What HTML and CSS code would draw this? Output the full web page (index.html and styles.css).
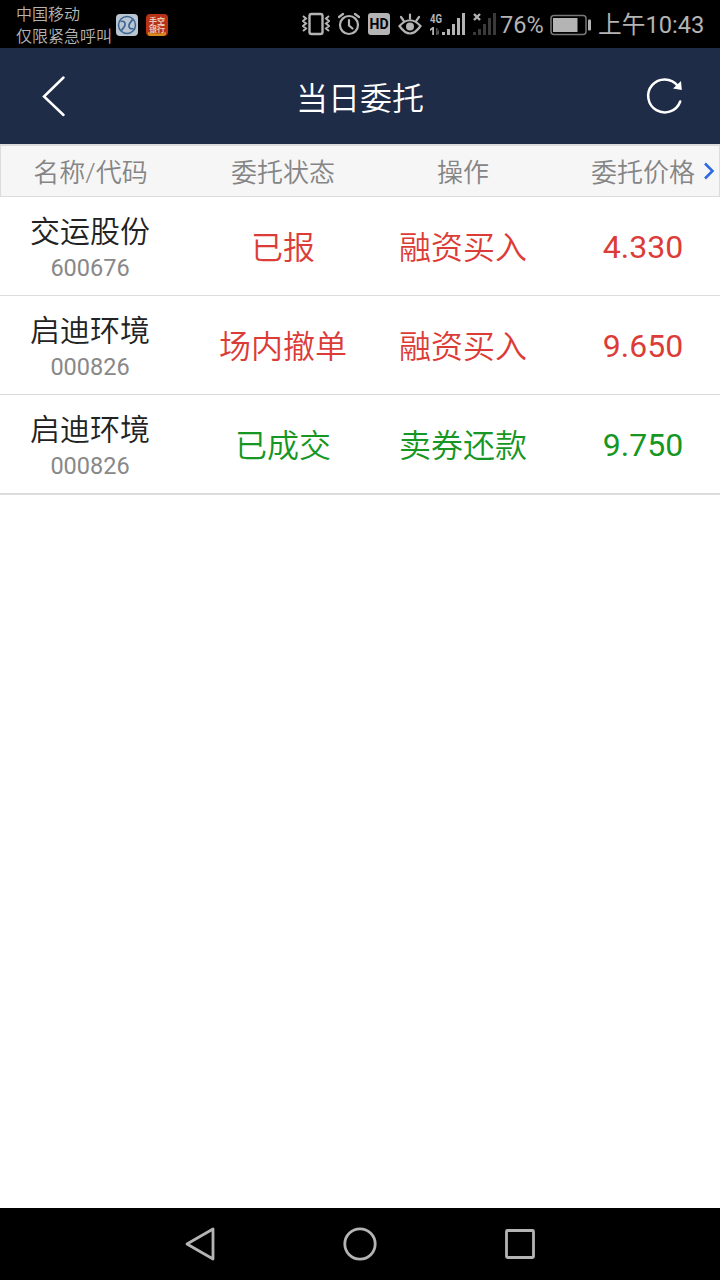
FILE: index.html
```html
<!DOCTYPE html>
<html lang="zh-CN">
<head>
    <meta charset="UTF-8">
    <meta name="viewport" content="width=device-width, initial-scale=1.0">
    <title>当日委托</title>
    <link rel="stylesheet" href="styles.css">
</head>
<body>
    <div class="screen">
        <div class="status-bar">
            <div class="carrier">
                <span>中国移动</span>
                <span>仅限紧急呼叫</span>
            </div>
            <svg class="app-icon" width="22" height="22" viewBox="0 0 22 22">
                <rect width="22" height="22" rx="4" fill="#b9c6d2"/>
                <circle cx="11" cy="11" r="8.5" fill="none" stroke="#3d6594" stroke-width="1.5"/>
                <path d="M4.500 7.500C8 6.500 9.500 8.500 9 11S6.500 14.500 5.500 16.500M17.500 14.500C14 15.500 12.500 13.500 13 11S15.500 7.500 16.500 5.500" fill="none" stroke="#3d6594" stroke-width="1.700"/>
            </svg>
            <svg class="app-icon app-bank" width="22" height="22" viewBox="0 0 22 22">
                <rect width="22" height="22" rx="4" fill="#b83218"/>
                <path d="M2 18q9 3 18 0v2q-1 2-3 2H5q-3 0-3-2z" fill="#d78a1d"/>
                <text x="11" y="10" text-anchor="middle" class="bank-text">手空</text>
                <text x="11" y="18" text-anchor="middle" class="bank-text">银行</text>
            </svg>

            <div class="status-icons">
                <!-- vibrate -->
                <svg width="28" height="48" viewBox="0 0 28 48" fill="none" stroke="#b4b4b4">
                    <rect x="7.500" y="14" width="13" height="20" rx="2" stroke-width="2.400"/>
                    <path d="M1 16l3 2.500-3 2.500 3 2.500-3 2.500 3 2.500-3 2.500M27 16l-3 2.500 3 2.500-3 2.500 3 2.500-3 2.500 3 2.500" stroke-width="2"/>
                </svg>
                <!-- alarm -->
                <svg class="alarm" width="22" height="48" viewBox="0 0 22 48" fill="none" stroke="#b4b4b4" stroke-width="2.200" stroke-linecap="round">
                    <circle cx="11" cy="25" r="9"/>
                    <path d="M11 20v5.500l3.500 3M1 17L5 14M21 17L17 14"/>
                </svg>
                <!-- hd -->
                <svg class="hd" width="22" height="48" viewBox="0 0 22 48">
                    <rect y="13" width="22" height="22" rx="3" fill="#b4b4b4"/>
                    <text x="11" y="28.800" text-anchor="middle" class="hd-text">HD</text>
                </svg>
                <!-- eye comfort -->
                <svg class="eye" width="24" height="48" viewBox="0 0 24 48" fill="none" stroke="#b4b4b4" stroke-width="2.200" stroke-linecap="round">
                    <path d="M1.500 26Q12 14.500 22.500 26Q12 41 1.500 26zM12 14.500v4M3 17l2.500 3.500M21 17l-2.500 3.500"/>
                    <circle cx="12" cy="26.500" r="4" fill="#b4b4b4" stroke="none"/>
                </svg>
                <!-- sim 1 -->
                <svg class="signal" width="36" height="48" viewBox="0 0 36 48" fill="#b4b4b4">
                    <text x="0" y="22.500" textLength="12" lengthAdjust="spacingAndGlyphs" class="net-text">4G</text>
                    <path d="M0 29l2.500-2H4v8H2.200v-5.500L0 31z"/>
                    <path d="M6 28h1.500v7H6zM9 29v6l-2-2z" fill="#555"/>
                    <path d="M12 32h3v3h-3zM17 29h3v6h-3zM22 24h3v11h-3zM27 18h3v17h-3zM32 13h3v22h-3z"/>
                </svg>
                <!-- sim 2 -->
                <svg class="signal-off" width="23" height="48" viewBox="0 0 23 48" fill="#3a3a3a">
                    <path d="M1 14l6 6M7 14l-6 6" stroke="#b4b4b4" stroke-width="2.400"/>
                    <path d="M0 32h3v3H0zM5 29h3v6H5zM10 24h3v11h-3zM15 18h3v17h-3zM20 13h3v22h-3z"/>
                </svg>
                <span class="percent">76%</span>
                <svg class="battery" width="41" height="48" viewBox="0 0 41 48">
                    <rect x="1" y="15.500" width="35" height="19" rx="3" fill="none" stroke="#777" stroke-width="1.500"/>
                    <rect x="3" y="18" width="24.500" height="14" fill="#b4b4b4"/>
                    <rect x="38" y="19.500" width="3" height="11" rx="1" fill="#b4b4b4"/>
                </svg>
                <span class="clock">上午10:43</span>
            </div>
        </div>

        <div class="header">
            <svg class="back" width="26" height="44" viewBox="0 0 26 44">
                <path d="M21.500 3.500L2 22.500l19.500 18.500" fill="none" stroke="#fff" stroke-width="2.500" stroke-linecap="round"/>
            </svg>
            <h1>当日委托</h1>
            <svg class="refresh" width="40" height="40" viewBox="0 0 40 40">
                <path d="M32.500 9.500A16.500 16.500 0 1 0 35.200 25.500" fill="none" stroke="#fff" stroke-width="2.500" stroke-linecap="round"/>
                <path d="M36 5L36.800 14L28 12.500z" fill="#fff"/>
            </svg>
        </div>

        <div class="row table-head">
            <div class="col">名称/代码</div>
            <div class="col">委托状态</div>
            <div class="col">操作</div>
            <div class="col">委托价格</div>
            <svg class="more" width="12" height="18" viewBox="0 0 12 18">
                <path d="M2 1.500L9.500 9 2 16.500" fill="none" stroke="#2f6be0" stroke-width="2.600"/>
            </svg>
        </div>

        <div class="list">
            <div class="row order red">
                <div class="col stock">
                    <span class="name">交运股份</span>
                    <span class="code">600676</span>
                </div>
                <div class="col">已报</div>
                <div class="col">融资买入</div>
                <div class="col price">4.330</div>
            </div>
            <div class="row order red">
                <div class="col stock">
                    <span class="name">启迪环境</span>
                    <span class="code">000826</span>
                </div>
                <div class="col">场内撤单</div>
                <div class="col">融资买入</div>
                <div class="col price">9.650</div>
            </div>
            <div class="row order green">
                <div class="col stock">
                    <span class="name">启迪环境</span>
                    <span class="code">000826</span>
                </div>
                <div class="col">已成交</div>
                <div class="col">卖券还款</div>
                <div class="col price">9.750</div>
            </div>
        </div>

        <div class="nav-bar">
            <svg width="34" height="36" viewBox="0 0 34 36"><path d="M4 18L30 3v30z"/></svg>
            <svg width="34" height="36" viewBox="0 0 34 36"><circle cx="17" cy="18" r="15.200"/></svg>
            <svg width="34" height="36" viewBox="0 0 34 36"><rect x="3.500" y="4.500" width="27" height="27" rx="1"/></svg>
        </div>
    </div>
</body>
</html>
```
FILE: styles.css
```css
* {
    margin: 0;
    padding: 0;
    box-sizing: border-box;
}

body {
    background: #fff;
    font-family: Roboto, "Noto Sans CJK SC", sans-serif;
    font-weight: 350;
}

svg {
    display: block;
    flex-shrink: 0;
}

.screen {
    width: 720px;
    height: 1280px;
    display: flex;
    flex-direction: column;
    overflow: hidden;
}

/* status bar */
.status-bar {
    height: 48px;
    background: #000;
    color: #b4b4b4;
    display: flex;
    align-items: center;
    padding: 0 16px;
    white-space: nowrap;
}

.carrier {
    display: flex;
    flex-direction: column;
    width: 100px;
    padding-top: 3px;
    font-size: 16px;
    line-height: 22px;
}

.app-icon {
    margin-top: 2px;
}

.app-bank {
    margin-left: 8px;
}

.bank-text {
    font-size: 8px;
    font-weight: 700;
    fill: #e8c9b8;
}

.status-icons {
    margin-left: auto;
    display: flex;
    align-items: center;
}

.alarm,
.hd,
.eye,
.signal {
    margin-left: 8px;
}

.signal-off {
    margin-left: 7px;
}

.hd-text {
    font-size: 14px;
    font-weight: 700;
    fill: #000;
}

.net-text {
    font-size: 13px;
    font-weight: 700;
}

.percent {
    width: 48px;
    padding: 2px 0 0 4px;
    font-size: 23.5px;
    font-weight: 400;
}

.battery {
    margin-left: 6px;
}

.clock {
    width: 106px;
    margin-left: 7px;
    padding-top: 2px;
    font-size: 23.7px;
    font-weight: 400;
    line-height: 32px;
}

/* title bar */
.header {
    height: 96px;
    background: #1e2c48;
    color: #fff;
    display: grid;
    grid-template-columns: 40px 1fr 40px;
    align-items: center;
    padding: 0 35px 0 42px;
    text-align: center;
}

.header h1 {
    padding-right: 7px;
    font-size: 32px;
    font-weight: 350;
}

/* table */
.row {
    display: grid;
    grid-template-columns: 193px 180px 180px 1fr;
    align-items: center;
    text-align: center;
}

.col:first-child {
    padding-right: 13px;
}

.col:nth-child(4) {
    padding-left: 13px;
}

.table-head {
    position: relative;
    grid-template-columns: 192px 180px 180px 1fr;
    height: 53px;
    background: #f6f6f7;
    border: 1px solid #dcdcdc;
    border-top-width: 2px;
    color: #858585;
    font-size: 26px;
    line-height: 48px;
    padding-top: 3px;
}

.table-head .col:nth-child(4) {
    padding-left: 14px;
}

.more {
    position: absolute;
    top: 16px;
    right: 4px;
}

.list {
    flex: 1;
}

.order {
    height: 99px;
    border-bottom: 1px solid #dcdcdc;
    font-size: 32px;
    line-height: 48px;
}

.order:last-child {
    height: 100px;
    border-bottom-width: 2px;
}

.order .col {
    padding-top: 4px;
}

.order .price {
    padding-top: 1px;
}

.stock {
    display: flex;
    flex-direction: column;
    align-items: center;
}

.name {
    color: #222;
    font-size: 30px;
    line-height: 40px;
}

.code {
    color: #888;
    font-size: 23.5px;
    font-weight: 400;
    line-height: 32px;
}

.price {
    font-weight: 400;
}

.red {
    color: #dc3c37;
}

.green {
    color: #169622;
}

/* android buttons */
.nav-bar {
    height: 72px;
    background: #000;
    display: flex;
    align-items: center;
    justify-content: center;
    gap: 126px;
}

.nav-bar svg {
    fill: none;
    stroke: #b4b4b4;
    stroke-width: 2.8;
    stroke-linejoin: round;
}
```
